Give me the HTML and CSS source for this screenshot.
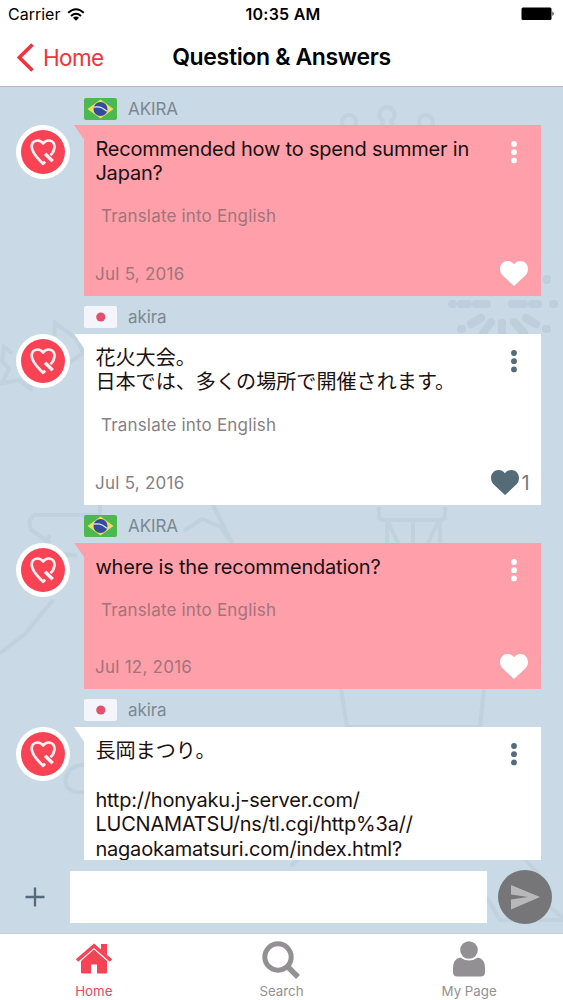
FILE: index.html
```html
<!DOCTYPE html>
<html lang="en">
<head>
<meta charset="utf-8">
<title>Question &amp; Answers</title>
<link rel="stylesheet" href="styles.css">
</head>
<body>
<svg class="defs" width="0" height="0" aria-hidden="true">
  <symbol id="brazil" viewBox="0 0 33 22"><rect width="33" height="22" rx="2" fill="#4bb950"/><path d="M3.5 11 16.5 1.5 29.5 11 16.5 20.5Z" fill="#f3da62"/><circle cx="16.5" cy="11" r="7" fill="#334c9f"/><path d="M10 9.2Q17 7.5 22.8 13.3" fill="none" stroke="#dfe8f5" stroke-width="1.3"/></symbol>
  <symbol id="japan" viewBox="0 0 33 22"><rect width="33" height="22" rx="2" fill="#f4f5fb"/><circle cx="16.8" cy="11" r="4.6" fill="#e2506c"/></symbol>
  <symbol id="avatar" viewBox="0 0 54 54"><circle cx="27" cy="27" r="27" fill="#fff"/><circle cx="27" cy="27" r="22" fill="#fa4255"/><g fill="none" stroke="#fff0f2" stroke-width="2.7" stroke-linejoin="round"><path d="M29.2 36.7 27 38.8C22.5 34 15.7 28.3 15.7 21.7C15.7 15.3 23.4 13.3 27.1 18.6C30.8 13.3 38.5 15.3 38.5 21.7C38.5 24.7 37.3 27.3 34.5 30.3"/><path d="M29 28.7 36.7 36.3" stroke-width="3.5"/></g></symbol>
  <symbol id="heart" viewBox="0 0 28 25"><path d="M14 25 3.5 15.3C1.2 13.1 0 10.9 0 7.9C0 3.4 3.4 0 7.6 0C10.2 0 12.5 1.2 14 3.3C15.5 1.2 17.8 0 20.4 0C24.6 0 28 3.4 28 7.9C28 10.9 26.8 13.1 24.5 15.3Z" fill="currentColor"/></symbol>
  <symbol id="more" viewBox="0 0 6 23"><g fill="currentColor"><circle cx="3" cy="3" r="2.9"/><circle cx="3" cy="11.2" r="2.9"/><circle cx="3" cy="19.4" r="2.9"/></g></symbol>
</svg>

<div class="app">
  <header class="top">
    <div class="status">
      <div class="carrier"><span class="carrier-name">Carrier</span>
        <svg width="18" height="13" viewBox="0 0 18 13"><g fill="none" stroke="#000" stroke-width="2"><path d="M1.2 4.8Q9-2.2 16.8 4.8"/><path d="M4 8Q9 3.6 14 8"/></g><path d="M5.9 9.7Q9 7.2 12.1 9.7L9 12.8Z"/></svg>
      </div>
      <div class="clock">10:35 AM</div>
      <div class="battery"><svg width="34" height="14" viewBox="0 0 34 14"><rect x=".5" y=".5" width="30" height="12.5" rx="1.5"/><path d="M31.5 4.5Q33.7 6.7 31.5 9Z"/></svg></div>
    </div>
    <nav class="nav">
      <a class="back"><svg width="18" height="29" viewBox="0 0 18 29"><path d="M15.5 1.5 2.3 14.5 15.5 27.5" fill="none" stroke="#ee343c" stroke-width="3.7"/></svg><span>Home</span></a>
      <h1 class="title">Question &amp; Answers</h1>
    </nav>
  </header>

  <main class="chat">
    <svg class="doodles" width="563" height="846" viewBox="0 87 563 846" aria-hidden="true">
      <g fill="none" stroke="#a9bfce" stroke-width="4" opacity=".26">
        <circle cx="349" cy="122" r="7"/><path d="M381 128 383 121A7.5 7.5 0 1 1 391 121L394 128"/><circle cx="426" cy="122" r="7"/>
        <path d="M84 344 72 335 55 323 54 343 37 347 46 357M12 353 4 347 2 361 9 369 2 383 19 380 31 389 35 375 48 379M68 364 83 353 75 336"/>
        <path d="M100 505V515H35Q27 518 31 530L50 543M50 535 42 550 77 556M184 531 202 519 221 527 232 543M213 505 232 543M53 600 25 634 0 653"/>
        <path d="M379 507V517Q380 520 386 520H439Q445 520 445 515V507M387 520V543M440 520V543M413 520V543M388 522 398 543M438 522 428 543M341 689 347 727H480L484 689M84 765C62 764 57 796 84 792"/>
        <path d="M291 866 303 854H520L542 878M487 898 500 920H563M545 903 563 918"/>
      </g>
      <g fill="none" stroke="#a5b9cc" stroke-width="8" stroke-linecap="round" opacity=".32"><path d="M452 304H453M461 304H468M476 304H487M512 304H524M532 304H538M553 304H554M461 329H462M471 324 481 318M547 329H546M536 324 526 318M483 333 491 322M502 334V323M524 333 514 322M547 279V280"/></g>
    </svg>

    <div class="thread">
      <article class="message">
        <svg class="avatar"><use href="#avatar"/></svg>
        <div class="content">
          <div class="author"><svg class="flag"><use href="#brazil"/></svg><span>AKIRA</span></div>
          <section class="bubble pink">
            <p class="body">Recommended how to spend summer in<br>Japan?</p>
            <a class="translate">Translate into English</a>
            <footer class="meta"><time>Jul 5, 2016</time><span class="likes"><svg class="heart"><use href="#heart"/></svg></span></footer>
            <svg class="more"><use href="#more"/></svg>
          </section>
        </div>
      </article>
      <article class="message">
        <svg class="avatar"><use href="#avatar"/></svg>
        <div class="content">
          <div class="author"><svg class="flag"><use href="#japan"/></svg><span>akira</span></div>
          <section class="bubble white">
            <p class="body ja" lang="ja">花火大会。<br>日本では、多くの場所で開催されます。</p>
            <a class="translate">Translate into English</a>
            <footer class="meta"><time>Jul 5, 2016</time><span class="likes"><svg class="heart"><use href="#heart"/></svg><span class="count">1</span></span></footer>
            <svg class="more"><use href="#more"/></svg>
          </section>
        </div>
      </article>
      <article class="message">
        <svg class="avatar"><use href="#avatar"/></svg>
        <div class="content">
          <div class="author"><svg class="flag"><use href="#brazil"/></svg><span>AKIRA</span></div>
          <section class="bubble pink">
            <p class="body">where is the recommendation?</p>
            <a class="translate">Translate into English</a>
            <footer class="meta"><time>Jul 12, 2016</time><span class="likes"><svg class="heart"><use href="#heart"/></svg></span></footer>
            <svg class="more"><use href="#more"/></svg>
          </section>
        </div>
      </article>
      <article class="message">
        <svg class="avatar"><use href="#avatar"/></svg>
        <div class="content">
          <div class="author"><svg class="flag"><use href="#japan"/></svg><span>akira</span></div>
          <section class="bubble white">
            <p class="body ja" lang="ja">長岡まつり。</p>
            <p class="body link">http://honyaku.j-server.com/<br>LUCNAMATSU/ns/tl.cgi/http%3a//<br>nagaokamatsuri.com/index.html?</p>
            <svg class="more"><use href="#more"/></svg>
          </section>
        </div>
      </article>
    </div>

    <form class="composer">
      <svg width="20" height="20" viewBox="0 0 20 20"><path d="M10 .5V19.5M.5 10H19.5" stroke="#526b7c" stroke-width="2.3"/></svg>
      <div class="field"></div>
      <svg class="send" width="54" height="54" viewBox="0 0 54 54"><circle cx="27" cy="27" r="27" fill="#767678"/><path d="M13 15 42 27 13 39.5V29.5L30 27 13 24.5Z" fill="#b8b8ba"/></svg>
    </form>
  </main>

  <nav class="tabs">
    <a class="tab active"><svg width="38" height="36" viewBox="0 0 38 36"><path d="M2 19.5 19 4.7 36 19.5" fill="none" stroke="#fa4255" stroke-width="3.5"/><path d="M26 3H32V14L26 9ZM19 8.5 32 20V31Q32 32.5 30.5 32.5H22V23.5H16V32.5H7.5Q6 32.5 6 31V20Z" fill="#fa4255"/></svg><span>Home</span></a>
    <a class="tab"><svg width="38" height="38" viewBox="0 0 38 38"><circle cx="16" cy="16" r="13.2" fill="none" stroke="#929092" stroke-width="5"/><path d="M25 25 36 36" stroke="#929092" stroke-width="5.5"/></svg><span>Search</span></a>
    <a class="tab"><svg width="34" height="36" viewBox="0 0 34 36"><circle cx="17" cy="9" r="8.8" fill="#929092"/><path d="M8 16.5Q17 22.5 26 16.5Q33 18 33 27V31Q33 35.5 28.5 35.5H5.5Q1 35.5 1 31V27Q1 18 8 16.5Z" fill="#929092"/></svg><span>My Page</span></a>
  </nav>
</div>
</body>
</html>
```

FILE: styles.css
```css
* { box-sizing: border-box; }
body { margin: 0; font-family: Inter, "Noto Sans CJK JP", sans-serif; background: #fff; }
.defs { position: absolute; }
svg { display: block; flex: none; }
.app { width: 563px; height: 1000px; display: flex; flex-direction: column; overflow: hidden; }

.top { height: 87px; border-bottom: 1px solid #b5b9bd; background: #fff; }
.status { height: 28px; padding: 0 8px; display: grid; grid-template-columns: 1fr auto 1fr; align-items: center; font-size: 16px; line-height: 28px; }
.carrier { display: flex; align-items: center; gap: 7px; }
.clock { font-weight: 600; letter-spacing: .25px; padding-left: 3px; }
.battery { display: flex; justify-content: flex-end; }
.nav { height: 58px; padding: 0 17px; display: grid; grid-template-columns: 1fr auto 1fr; align-items: center; }
.back { display: flex; align-items: center; gap: 8px; color: #ee343c; font-size: 22.5px; letter-spacing: -.6px; }
.title { margin: 0; font-size: 23px; font-weight: 600; letter-spacing: -.35px; }

.chat { position: relative; flex: none; height: 846px; display: flex; flex-direction: column; background: #c9d9e5; isolation: isolate; }
.doodles { position: absolute; inset: 0; z-index: -1; }
.thread { height: 773px; overflow: hidden; }
.message { display: flex; gap: 14px; padding: 0 22px 0 16px; }
.avatar { width: 54px; height: 54px; margin-top: 38px; }
.content { flex: 1; }
.author { height: 38px; padding-top: 5px; display: flex; align-items: center; gap: 11px; color: #7c8890; font-size: 17px; letter-spacing: -.1px; }
.flag { width: 33px; height: 22px; }
.bubble { position: relative; padding: 12px 11px; color: #1b1012; }
.bubble::before { content: ""; position: absolute; left: -10px; top: 0; width: 11px; height: 16px; background: inherit; clip-path: polygon(0 0, 100% 0, 100% 100%); }
.pink { background: #ff9faa; --icon: #fff; --muted: #a0757a; }
.white { background: #fff; --icon: #566b78; --muted: #858186; }
.body { margin: 0; padding-left: .4px; font-size: 20px; line-height: 24.4px; letter-spacing: -.2px; }
.ja { font-size: 20.1px; letter-spacing: 0; }
.link { margin-top: 24.4px; }
.translate { display: block; margin: 20.6px 0 0 6px; height: 20px; line-height: 20px; font-size: 17px; letter-spacing: .18px; color: var(--muted); }
.meta { height: 28px; margin: 33.4px 0 -4px; display: flex; justify-content: space-between; align-items: center; color: var(--muted); font-size: 17px; letter-spacing: .25px; }
.likes { display: flex; align-items: center; gap: 3px; color: var(--icon); padding-right: 2px; }
.heart { width: 28px; height: 25px; }
.count { color: #77777b; font-size: 20px; }
.likes:has(.count) { padding-right: 0; }
.more { position: absolute; width: 6px; height: 23px; right: 24px; top: 16px; color: var(--icon); }

.composer { margin: 0; height: 73px; padding: 0 11px 0 25px; display: flex; align-items: center; }
.field { width: 417px; height: 52px; margin: 0 10.5px 0 25px; background: #fff; }

.tabs { flex: 1; display: grid; grid-template-columns: repeat(3, 1fr); border-top: 1px solid #c5ced6; background: #fff; }
.tab { display: flex; flex-direction: column; align-items: center; justify-content: space-between; padding: 7px 0 1px; color: #929092; font-size: 13.3px; line-height: 16px; }
.active { color: #f0455c; }
```
